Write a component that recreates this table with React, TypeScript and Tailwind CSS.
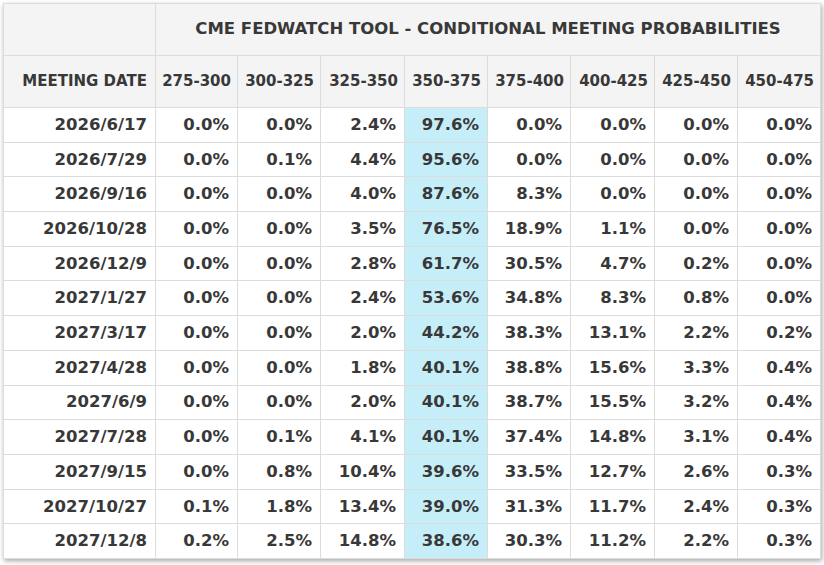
const RANGES = ["275-300", "300-325", "325-350", "350-375", "375-400", "400-425", "425-450", "450-475"];

const ROWS: [string, string[]][] = [
  ["2026/6/17", ["0.0%", "0.0%", "2.4%", "97.6%", "0.0%", "0.0%", "0.0%", "0.0%"]],
  ["2026/7/29", ["0.0%", "0.1%", "4.4%", "95.6%", "0.0%", "0.0%", "0.0%", "0.0%"]],
  ["2026/9/16", ["0.0%", "0.0%", "4.0%", "87.6%", "8.3%", "0.0%", "0.0%", "0.0%"]],
  ["2026/10/28", ["0.0%", "0.0%", "3.5%", "76.5%", "18.9%", "1.1%", "0.0%", "0.0%"]],
  ["2026/12/9", ["0.0%", "0.0%", "2.8%", "61.7%", "30.5%", "4.7%", "0.2%", "0.0%"]],
  ["2027/1/27", ["0.0%", "0.0%", "2.4%", "53.6%", "34.8%", "8.3%", "0.8%", "0.0%"]],
  ["2027/3/17", ["0.0%", "0.0%", "2.0%", "44.2%", "38.3%", "13.1%", "2.2%", "0.2%"]],
  ["2027/4/28", ["0.0%", "0.0%", "1.8%", "40.1%", "38.8%", "15.6%", "3.3%", "0.4%"]],
  ["2027/6/9", ["0.0%", "0.0%", "2.0%", "40.1%", "38.7%", "15.5%", "3.2%", "0.4%"]],
  ["2027/7/28", ["0.0%", "0.1%", "4.1%", "40.1%", "37.4%", "14.8%", "3.1%", "0.4%"]],
  ["2027/9/15", ["0.0%", "0.8%", "10.4%", "39.6%", "33.5%", "12.7%", "2.6%", "0.3%"]],
  ["2027/10/27", ["0.1%", "1.8%", "13.4%", "39.0%", "31.3%", "11.7%", "2.4%", "0.3%"]],
  ["2027/12/8", ["0.2%", "2.5%", "14.8%", "38.6%", "30.3%", "11.2%", "2.2%", "0.3%"]],
];

// most likely target range gets the cyan column
const HIGHLIGHT = 3;

export default function App() {
  return (
    <div className="w-[824px] h-[565px] bg-white p-[3px] font-['DejaVu_Sans',sans-serif] text-[#383838]">
      <table className="w-[817px] table-fixed border-collapse border border-[#cfcfcf] shadow-[1px_2px_5px_rgba(0,0,0,0.35)]">
        <colgroup>
          <col className="w-[152px]" />
          <col className="w-[82px]" />
          <col className="w-[83px]" />
          <col className="w-[84px]" />
          <col className="w-[83px]" />
          <col className="w-[83px]" />
          <col className="w-[84px]" />
          <col className="w-[83px]" />
          <col className="w-[83px]" />
        </colgroup>
        <thead className="bg-[#f4f4f4]">
          <tr className="h-[52px]">
            <th className="border border-[#dcdcdc]" />
            <th colSpan={8} className="border border-[#dcdcdc] text-center text-[16.5px] font-bold">
              CME FEDWATCH TOOL - CONDITIONAL MEETING PROBABILITIES
            </th>
          </tr>
          <tr className="h-[52px]">
            <th className="border border-[#dcdcdc] pr-[8px] text-right text-[15px] font-bold whitespace-nowrap">MEETING DATE</th>
            {RANGES.map((r) => (
              <th key={r} className="border border-[#dcdcdc] pr-[6px] text-right text-[15px] font-bold whitespace-nowrap">
                {r}
              </th>
            ))}
          </tr>
        </thead>
        <tbody className="bg-white">
          {ROWS.map(([date, vals]) => (
            <tr key={date} className="h-[34.7px]">
              <td className="border border-[#dcdcdc] pr-[8px] pt-[1px] text-right text-[16.5px] font-bold">{date}</td>
              {vals.map((v, i) => (
                <td
                  key={i}
                  className={`border border-[#dcdcdc] pr-[8px] pt-[1px] text-right text-[16.5px] font-bold ${i === HIGHLIGHT ? "bg-[#c6eef8]" : ""}`}
                >
                  {v}
                </td>
              ))}
            </tr>
          ))}
        </tbody>
      </table>
    </div>
  );
}
